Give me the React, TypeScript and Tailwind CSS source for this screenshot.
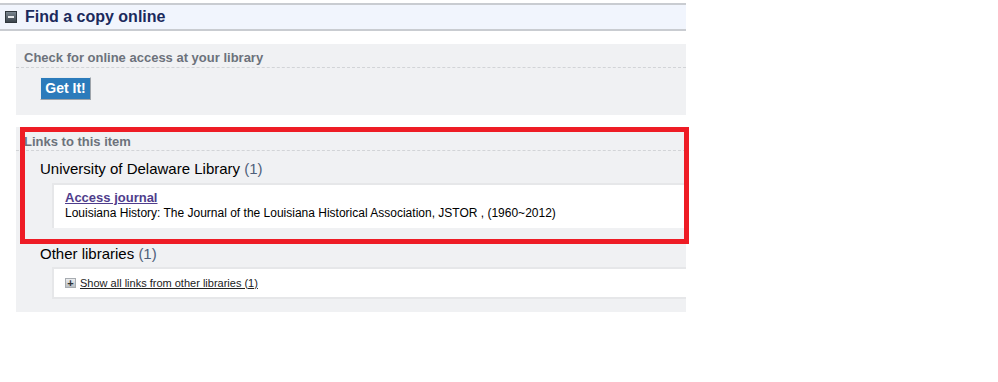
export default function App() {
  return (
    <div className="relative w-[998px] h-[382px] bg-white font-['Liberation_Sans',Arial,sans-serif]">
      {/* section header */}
      <div className="mt-[3px] w-[686px] h-[28px] flex items-center border-t-2 border-b-2 border-[#c9ccd1] bg-[#f1f5fd]">
        <span className="ml-[5px] w-[12px] h-[12px] flex items-center justify-center bg-gradient-to-b from-[#7b8690] to-[#3c454d] border border-[#2f363c]">
          <span className="w-[6px] h-[2px] bg-[#e8eaec]" />
        </span>
        <h2 className="ml-[8px] text-[16px] font-bold text-[#1b2a5c] leading-none">Find a copy online</h2>
      </div>

      {/* online access */}
      <div className="ml-[16px] mt-[13px] w-[670px] h-[71px] bg-[#f0f1f3]">
        <div className="h-[24px] px-[8px] pt-[7px] text-[13px] font-bold text-[#6c727b] leading-[14px] border-b border-dashed border-[#d2d4d7]">
          Check for online access at your library
        </div>
        <button className="ml-[24px] mt-[9px] w-[51px] h-[23px] bg-[#2b7bbb] text-white text-[14px] font-bold border border-t-[#e9eef2] border-l-[#e9eef2] border-r-[#9ea4aa] border-b-[#9ea4aa]">
          Get It!
        </button>
      </div>

      {/* links */}
      <div className="ml-[16px] mt-[12px] w-[670px] h-[185px] bg-[#f0f1f3]">
        <div className="h-[24px] px-[8px] pt-[8px] text-[13px] font-bold text-[#6c727b] leading-[14px] border-b border-dashed border-[#d2d4d7]">
          Links to this item
        </div>
        <div className="pl-[24px] pt-[9px] text-[15px] text-black leading-[18px]">
          University of Delaware Library <span className="text-[#4f5f7a]">(1)</span>
        </div>
        <div className="ml-[36px] mt-[5px] h-[45px] bg-white border-t-2 border-l-2 border-[#e6e7e9] pl-[11px] pt-[5px]">
          <a className="block text-[13px] font-bold text-[#4f3d8c] underline leading-[15px]">Access journal</a>
          <p className="text-[12px] text-black leading-[16px]">
            Louisiana History: The Journal of the Louisiana Historical Association, JSTOR , (1960~2012)
          </p>
        </div>
        <div className="pl-[24px] pt-[17px] text-[15px] text-black leading-[18px]">
          Other libraries <span className="text-[#4f5f7a]">(1)</span>
        </div>
        <div className="ml-[36px] mt-[4px] h-[32px] bg-white border-2 border-r-0 border-[#e6e7e9] pl-[11px] flex items-center">
          <span className="w-[11px] h-[10px] flex items-center justify-center bg-gradient-to-b from-[#eceef0] to-[#b9bec3] border border-[#a7acb1] text-[#2f3337] text-[11px] font-bold leading-none">
            +
          </span>
          <a className="ml-[4px] text-[11px] text-[#222] underline leading-none">Show all links from other libraries (1)</a>
        </div>
      </div>

      {/* highlight annotation */}
      <div className="absolute left-[20px] top-[124px] w-[669px] h-[117px] border-[5px] border-[#ee1c25] pointer-events-none" />
    </div>
  );
}
